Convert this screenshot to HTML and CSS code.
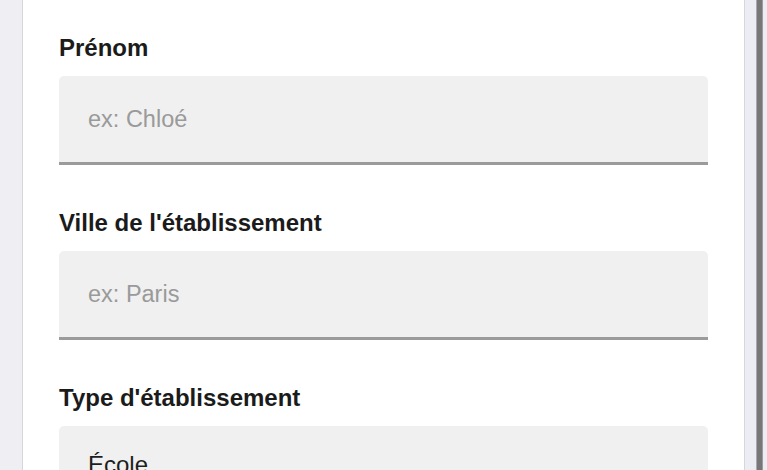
FILE: index.html
```html
<!DOCTYPE html>
<html lang="fr">
<head>
<meta charset="utf-8">
<title>Formulaire</title>
<link rel="stylesheet" href="styles.css">
</head>
<body>
<div class="page">
  <div class="gutter-left"></div>
  <main class="card">
    <div class="field">
      <label class="label" for="prenom">Prénom</label>
      <input class="input" id="prenom" type="text" placeholder="ex: Chloé">
    </div>
    <div class="field">
      <label class="label" for="ville">Ville de l'établissement</label>
      <input class="input" id="ville" type="text" placeholder="ex: Paris">
    </div>
    <div class="field">
      <label class="label" for="type">Type d'établissement</label>
      <div class="input select" id="type">École</div>
    </div>
  </main>
  <div class="gutter-right"><div class="scrollbar"></div></div>
</div>
</body>
</html>
```
FILE: styles.css
```css
* { box-sizing: border-box; }
html, body {
  margin: 0;
  padding: 0;
  height: 100%;
  overflow: hidden;
  background: #efeff4;
  font-family: "Liberation Sans", Arial, Helvetica, sans-serif;
}
.page {
  display: flex;
  height: 470px;
}
.gutter-left {
  width: 22px;
  flex: none;
  background: #eeeef3;
}
.card {
  width: 723px;
  flex: none;
  background: #ffffff;
  border-left: 1px solid #d6d6de;
  border-right: 1px solid #d6d6de;
  padding: 34px 36px 0 36px;
  display: flex;
  flex-direction: column;
  gap: 44px;
}
.field {
  display: flex;
  flex-direction: column;
  gap: 14px;
}
.label {
  font-size: 24px;
  line-height: 28px;
  font-weight: bold;
  color: #1b1b1b;
}
.input {
  display: block;
  width: 100%;
  height: 89px;
  border: none;
  border-bottom: 3px solid #9b9b9b;
  border-radius: 5px 5px 0 0;
  background: #f0f0f0;
  padding: 0 28px 0 29px;
  font-family: "Liberation Sans", Arial, Helvetica, sans-serif;
  font-size: 23.5px;
  color: #1e1e1e;
  outline: none;
}
.input::placeholder { color: #9a9a9a; }
.select {
  display: flex;
  align-items: center;
  font-size: 24px;
  padding-bottom: 8px;
}
.gutter-right {
  flex: 1;
  display: flex;
  background: #ececf3;
  padding-left: 11px;
}
.scrollbar {
  width: 7px;
  background: #777777;
  border-left: 1px solid #a9a9b0;
  border-right: 1px solid #9a9aa0;
}
```
